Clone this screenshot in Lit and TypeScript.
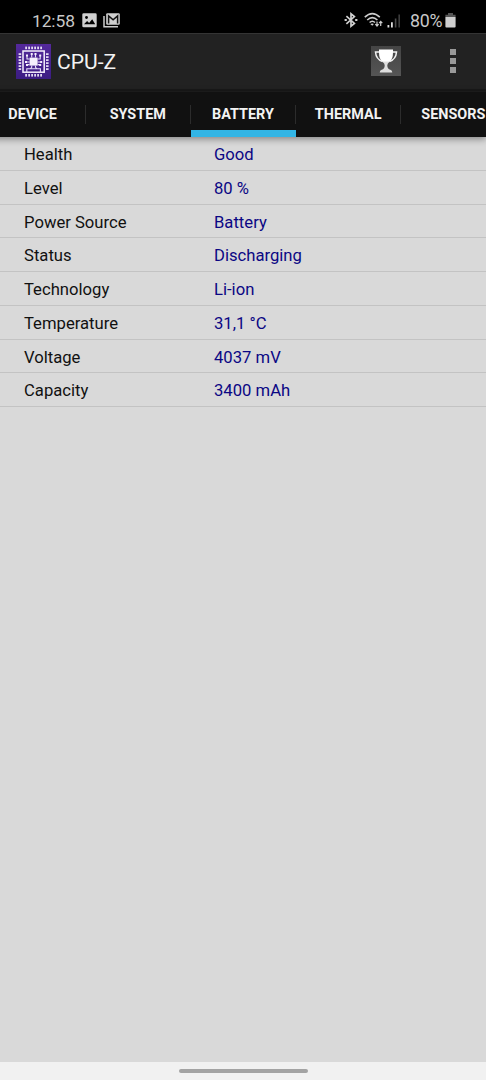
import { LitElement, html, svg, css } from "lit";
import { customElement, state } from "lit/decorators.js";
import { classMap } from "lit/directives/class-map.js";

const bluetooth = svg`<svg class="bt" width="14" height="16" viewBox="0 0 14 16" fill="none" stroke="#d0d0d0" stroke-width="1.7">
  <path d="M2.4 4.2 L10.4 11.4 L7 14.2 V1.8 L10.4 4.6 L2.4 11.8"/>
  <path d="M.6 8h2.2M11.2 8h2.2" stroke-width="1.9"/></svg>`;

const wifi = svg`<svg class="wifi" width="20" height="16" viewBox="0 0 20 16" fill="none" stroke="#cdcdcd" stroke-width="1.6">
  <path d="M.8 5.2 Q8.3 -1.9 15.8 5.2M3.2 8 Q8.3 3.2 13.4 8M5.6 10.5 Q8.3 8 11 10.5"/>
  <path d="M6.3 12.1 Q8.3 10.7 9.8 12.1 L8.3 13.8Z" fill="#cdcdcd" stroke="none"/>
  <path d="M13 9.6v4.2M11.4 12.2l1.6 1.8 1.6-1.8M16.7 13.9V9.4M15.1 11.1l1.6-1.8 1.6 1.8" stroke-width="1.2"/></svg>`;

const signal = svg`<svg class="signal" width="14" height="14" viewBox="0 0 14 14">
  <path d="M.5 11h1.8v2.6H.5zM4 8.2h1.8v5.4H4z" fill="#dedede"/>
  <path d="M7.8 4.4h1.6v9.2H7.8zM11.5.6h1.3v13h-1.3z" fill="#4b4b4b"/></svg>`;

const battery = svg`<svg class="batt" width="11" height="15" viewBox="0 0 11 15">
  <path d="M3 0h5v1.8h2.6V4H.4V1.8H3z" fill="#555"/><path d="M.4 4h10.2v9.4q0 1-1 1H1.4q-1 0-1-1z" fill="#cfcfcf"/></svg>`;

const picture = svg`<svg class="pic" width="15" height="15" viewBox="0 0 15 15">
  <rect x=".3" y=".3" width="14.4" height="14" rx="1.4" fill="#d0d0d0"/>
  <path d="M2 11.3 5.1 8l2 2 3.1-3.7 3 5z" fill="#000"/><circle cx="4.5" cy="4.5" r="1.4" fill="#000"/></svg>`;

const mail = svg`<svg class="mail" width="18" height="15" viewBox="0 0 18 15">
  <path d="M1 3v10.8h14" fill="none" stroke="#cacaca" stroke-width="1.5"/>
  <rect x="3.2" y=".2" width="13.6" height="11.6" rx="1.2" fill="#d0d0d0"/>
  <path d="M5.6 10.6V2.9l4.5 3.8 4.5-3.8v7.7" fill="none" stroke="#111" stroke-width="1.5"/></svg>`;

const pins = [9.3, 12.3, 15.3, 18.3, 21.3, 24.3];
const chip = svg`<svg class="logo" width="35" height="35" viewBox="0 0 35 35">
  <defs><linearGradient id="g" x1="0" y1="0" x2="0" y2="1"><stop offset="0" stop-color="#54299b"/><stop offset="1" stop-color="#3c1d83"/></linearGradient></defs>
  <rect width="35" height="35" fill="url(#g)"/>
  <g fill="#f4effc">
  ${pins.map((p) => svg`<rect x=${p} y="2.6" width="1.6" height="2.6"/><rect x=${p} y="30" width="1.6" height="2.6"/>
  <rect x="2.6" y=${p} width="2.6" height="1.6"/><rect x="30" y=${p} width="2.6" height="1.6"/>`)}
  <rect x="13.6" y="13.6" width="8" height="8"/></g>
  <rect x="7" y="7" width="21.2" height="21.2" fill="none" stroke="#f4effc" stroke-width="1.5"/>
  <g fill="none" stroke="#e8defa" stroke-width="1.1">
    <path d="M15.7 13.6V9.6M19.5 13.6V9.6M13.6 15h-2.6v-4M21.6 15h2.6v-4M9.8 18h3.8M21.6 18h3.8M13.6 20.6h-2.4M21.6 20.6h2.4"/>
    <path d="M10.8 28v-3.2h3.4l1.5-1.5v-1.7M24.4 28v-3.2H21l-1.5-1.5v-1.7M14.2 24.8h6.8"/></g>
  <g fill="#f4effc"><rect x="14.7" y="9" width="2" height="2"/><rect x="18.5" y="9" width="2" height="2"/><rect x="10" y="10.5" width="2" height="2"/><rect x="23.2" y="10.5" width="2" height="2"/><rect x="9" y="17" width="2" height="2"/><rect x="24.2" y="17" width="2" height="2"/><rect x="10" y="20" width="2" height="2"/><rect x="23.2" y="20" width="2" height="2"/></g></svg>`;

const trophy = svg`<svg class="trophy" width="30" height="30" viewBox="0 0 30 30">
  <defs><linearGradient id="t" x1="0" y1="0" x2="0" y2="1"><stop offset="0" stop-color="#444"/><stop offset="1" stop-color="#555"/></linearGradient>
  <linearGradient id="c" x1="0" y1="0" x2="0" y2="1"><stop offset=".5" stop-color="#fff"/><stop offset=".55" stop-color="#dedede"/></linearGradient></defs>
  <rect width="30" height="30" fill="url(#t)"/>
  <path d="M8 6H4.5Q5 13.2 11.5 15.6M22 6h3.5Q25 13.2 18.5 15.6" fill="none" stroke="#f2f2f2" stroke-width="1.5"/>
  <path d="M8 3.5h14v3q0 6.5-3.4 9.3-2.3 1.7-2.3 3.4 0 3.6 3 4.6 2 .5 2 2.7H8.7q0-2.2 2-2.7 3-1 3-4.6 0-1.7-2.3-3.4Q8 13 8 6.5z" fill="url(#c)"/></svg>`;

@customElement("app-root")
export class AppRoot extends LitElement {
  static styles = css`
    :host { display: flex; flex-direction: column; height: 1080px; width: 486px; overflow: hidden; background: #d9d9d9; font-family: Roboto, sans-serif; }
    svg { display: block; flex: none; }
    .status { height: 33px; flex: none; box-sizing: border-box; background: #000; color: #c8c8c8; display: flex; align-items: flex-start; padding: 0 30px 0 32px; font-size: 17.8px; line-height: 42px; }
    .clock { width: 50px; font-size: 17.4px; letter-spacing: -0.1px; }
    .pic { margin-top: 13px; }
    .mail { margin: 13px 0 0 6px; }
    .space { flex: 1; }
    .bt { margin-top: 12px; }
    .wifi { margin: 12px 0 0 6px; }
    .signal { margin: 14px 0 0 3px; }
    .percent { margin-left: 9px; width: 35px; letter-spacing: -0.2px; white-space: nowrap; }
    .batt { margin-top: 13px; }
    .bar { height: 58px; flex: none; box-sizing: border-box; display: flex; align-items: center; background: #222; border-top: 1px solid #343434; border-bottom: 2px solid #191919; padding: 0 30px 0 15.5px; }
    .title { flex: 1; color: #f3f3f3; font-size: 21.1px; margin-left: 6.5px; line-height: 28px; }
    .trophy { margin: 0 49px 2px 0; }
    .more { display: grid; gap: 3px; width: 6px; padding-bottom: 2px; }
    .more i { width: 6px; height: 6px; background: #999; }
    .tabs { height: 46px; flex: none; box-sizing: border-box; display: flex; margin-left: -19.5px; background: #111; border-top: 1px solid #1b1b1b; box-shadow: 0 2px 7px rgba(0, 0, 0, 0.4); }
    .tab { width: 105.2px; flex: none; box-sizing: border-box; display: grid; grid-template-rows: 38px 7px; color: #f3f3f3; font-weight: 700; font-size: 14.4px; text-align: center; }
    .label { height: 19px; line-height: 19px; margin-top: 13px; border-right: 1px solid #2c2c2c; white-space: nowrap; }
    .active { background: linear-gradient(#33b5e5, #33b5e5) bottom / 100% 7px no-repeat; }
    .rows { flex: 1; }
    .row { height: 33.75px; box-sizing: border-box; border-bottom: 1px solid #c3c3c3; display: grid; grid-template-columns: 190px 1fr; padding-left: 24px; font-size: 16.65px; line-height: 35.6px; color: #111; }
    .value { color: #0b0784; }
    .nav { height: 18px; flex: none; background: #f1f1f1; display: flex; justify-content: center; align-items: center; }
    .pill { width: 129px; height: 4.5px; border-radius: 3px; background: #a3a3a3; }
  `;

  @state() private selected = "BATTERY";

  private tabs = ["DEVICE", "SYSTEM", "BATTERY", "THERMAL", "SENSORS"];
  private info = [
    ["Health", "Good"],
    ["Level", "80 %"],
    ["Power Source", "Battery"],
    ["Status", "Discharging"],
    ["Technology", "Li-ion"],
    ["Temperature", "31,1 °C"],
    ["Voltage", "4037 mV"],
    ["Capacity", "3400 mAh"],
  ];

  render() {
    return html`
      <div class="status">
        <span class="clock">12:58</span>${picture}${mail}<span class="space"></span>
        ${bluetooth}${wifi}${signal}<span class="percent">80%</span>${battery}
      </div>
      <header class="bar">
        ${chip}<span class="title">CPU-Z</span>${trophy}
        <span class="more"><i></i><i></i><i></i></span>
      </header>
      <nav class="tabs">
        ${this.tabs.map((t) => html`<div class=${classMap({ tab: true, active: t === this.selected })} @click=${() => (this.selected = t)}><span class="label">${t}</span></div>`)}
      </nav>
      <main class="rows">
        ${this.info.map(([k, v]) => html`<div class="row"><span>${k}</span><span class="value">${v}</span></div>`)}
      </main>
      <footer class="nav"><div class="pill"></div></footer>
    `;
  }
}
